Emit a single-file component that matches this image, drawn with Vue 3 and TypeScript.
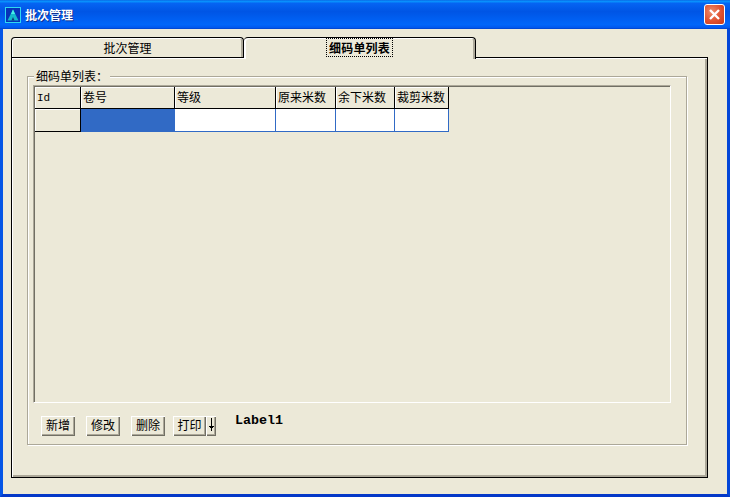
<script setup lang="ts">
const columns = [
  { key: 'id', label: 'Id' },
  { key: 'roll', label: '卷号' },
  { key: 'grade', label: '等级' },
  { key: 'orig', label: '原来米数' },
  { key: 'left', label: '余下米数' },
  { key: 'cut', label: '裁剪米数' },
]
const buttons = ['新增', '修改', '删除']
</script>

<template>
  <div class="window">
    <header class="titlebar">
      <svg class="app-icon" width="16" height="16" viewBox="0 0 16 16">
        <rect x="0.5" y="0.5" width="15" height="15" fill="#0733b8" stroke="#2fd8f0" />
        <path d="M8 2.5 L13.5 13.5 L2.5 13.5 Z" fill="#14b8cc" />
        <path d="M8 2.5 L10 7 L6 7 Z" fill="#45f0e8" />
        <path d="M8 10 L9.5 13.5 L6.5 13.5 Z" fill="#0a3a80" />
      </svg>
      <span class="title">批次管理</span>
      <div class="close">
        <svg width="13" height="13" viewBox="0 0 13 13">
          <path d="M2 2 L11 11 M11 2 L2 11" stroke="#fff" stroke-width="2.4" fill="none" />
        </svg>
      </div>
    </header>

    <div class="client">
      <div class="tabs">
        <div class="tab first">批次管理</div>
        <div class="tab active"><span class="focus">细码单列表</span></div>
      </div>

      <section class="page">
        <fieldset class="group">
          <legend class="legend">细码单列表：</legend>
          <div class="grid">
            <div class="grid-table">
              <div v-for="c in columns" :key="c.key" class="head" :class="'col-' + c.key">{{ c.label }}</div>
              <div class="indicator"></div>
              <div class="cell selected"></div>
              <div class="cell"></div>
              <div class="cell"></div>
              <div class="cell"></div>
              <div class="cell"></div>
            </div>
          </div>
          <div class="toolbar">
            <button v-for="b in buttons" :key="b" class="btn">{{ b }}</button>
            <div class="split">
              <button class="btn print">打印</button>
              <button class="btn arrow">
                <svg width="5" height="13" viewBox="0 0 5 13">
                  <path d="M2 0h1v13h-1z M0 8h5v1h-1v1h-1v1h-1v-1h-1v-1h-1z" fill="#000" />
                </svg>
              </button>
            </div>
            <span class="label">Label1</span>
          </div>
        </fieldset>
      </section>
    </div>
  </div>
</template>

<style scoped>
.window {
  width: 730px;
  height: 497px;
  display: flex;
  flex-direction: column;
  font-family: "Noto Sans CJK SC", "Liberation Sans", sans-serif;
  font-size: 12px;
  color: #000;
  overflow: hidden;
}

.titlebar {
  height: 29px;
  flex: none;
  box-sizing: border-box;
  display: flex;
  align-items: center;
  padding: 0 5px 0 5px;
  background: linear-gradient(to bottom, #0a5fe0 0, #0997ff 4%, #0564f2 12%, #0055e5 40%, #0066fa 85%, #0058ee 95%, #0041c8 100%);
}

.app-icon {
  flex: none;
  margin-top: 1px;
}

.title {
  margin-left: 4px;
  color: #fff;
  font-weight: 700;
  font-size: 12px;
  text-shadow: 1px 1px 0 #0f2f90;
}

.close {
  margin-left: auto;
  width: 21px;
  height: 21px;
  box-sizing: border-box;
  border: 1px solid #fff;
  border-radius: 3px;
  background: radial-gradient(circle at 35% 35%, #ee8d6c 0, #e0512f 55%, #c23a1a 100%);
  display: flex;
  align-items: center;
  justify-content: center;
}

.client {
  flex: 1;
  display: flex;
  flex-direction: column;
  min-height: 0;
  background: #ece9d8;
  border-left: 3px solid #0455e6;
  border-right: 3px solid #0346d8;
  border-bottom: 3px solid #0338c8;
  padding: 8px 19px 16px 8px;
}

.tabs {
  display: flex;
  height: 20px;
  flex: none;
}

.tab {
  box-sizing: border-box;
  text-align: center;
  background: #ece9d8;
  border: 1px solid #000;
  border-bottom: none;
  border-radius: 4px 4px 0 0;
  line-height: 20px;
}

.tab.first {
  width: 233px;
  box-shadow: inset 1px 1px 0 #fff, inset -2px 0 0 #aca899;
}

.tab.active {
  width: 232px;
  height: 22px;
  position: relative;
  z-index: 1;
  font-weight: 700;
  border-left: none;
  box-shadow: inset 2px 1px 0 #fff, inset -2px 0 0 #aca899;
}

.focus {
  outline: 1px dotted #000;
  padding: 0 2px;
  letter-spacing: 0.2px;
}

.page {
  flex: 1;
  min-height: 0;
  box-sizing: border-box;
  background: #ece9d8;
  border: 1px solid #000;
  box-shadow: inset 1px 1px 0 #fff, inset -2px -2px 0 #aca899;
  padding: 11px 20px 32px 15px;
  display: flex;
}

.group {
  flex: 1;
  min-width: 0;
  margin: 0;
  box-sizing: border-box;
  border: 1px solid #aca899;
  box-shadow: 1px 1px 0 #fff, inset 1px 1px 0 #fff;
  padding: 2px 15px 0 5px;
}

.legend {
  padding: 0 2px;
  margin-left: 1px;
  line-height: 14px;
  background: #ece9d8;
}

.grid {
  height: 318px;
  box-sizing: border-box;
  border-left: 1px solid #aca899;
  border-top: 1px solid #aca899;
  border-right: 1px solid #fff;
  border-bottom: 1px solid #fff;
  box-shadow: inset 1px 1px 0 #716f64;
  padding: 1px 0 0 1px;
}

.grid-table {
  display: grid;
  grid-template-columns: 46px 94px 101px 60px 59px 54px;
  grid-template-rows: 22px 23px;
  width: max-content;
}

.head {
  box-sizing: border-box;
  border-right: 1px solid #000;
  border-bottom: 1px solid #000;
  padding-left: 2px;
  line-height: 19px;
  white-space: nowrap;
  box-shadow: inset 1px 1px 0 #fff;
}

.col-id {
  font-family: "Liberation Mono", monospace;
  font-size: 11px;
  line-height: 22px;
}

.indicator {
  box-sizing: border-box;
  border-right: 1px solid #000;
  border-bottom: 1px solid #000;
  box-shadow: inset 1px 1px 0 #fff;
}

.cell {
  box-sizing: border-box;
  background: #fff;
  border-right: 1px solid #316ac5;
  border-bottom: 1px solid #316ac5;
}

.cell.selected {
  background: #316ac5;
}

.toolbar {
  display: flex;
  align-items: flex-start;
  margin-top: 13px;
  margin-left: 8px;
}

.btn {
  box-sizing: border-box;
  width: 34px;
  height: 20px;
  margin: 0 11px 0 0;
  padding: 0 0 3px;
  font: inherit;
  line-height: 16px;
  color: #000;
  background: #ece9d8;
  border: none;
  border-radius: 0;
  box-shadow: inset 1px 1px 0 #fff, inset -1px -1px 0 #716f64, inset -2px -2px 0 #aca899;
}

.split {
  display: flex;
  margin-left: -3px;
}

.btn.print {
  width: 33px;
  margin: 0;
}

.btn.arrow {
  width: 10px;
  margin: 0;
  display: flex;
  align-items: center;
  justify-content: center;
}

.label {
  margin-left: 19px;
  font-family: "Liberation Mono", monospace;
  font-weight: 700;
  font-size: 13.33px;
  line-height: 10px;
}
</style>

<style>
html, body {
  margin: 0;
  background: #ece9d8;
}
</style>
